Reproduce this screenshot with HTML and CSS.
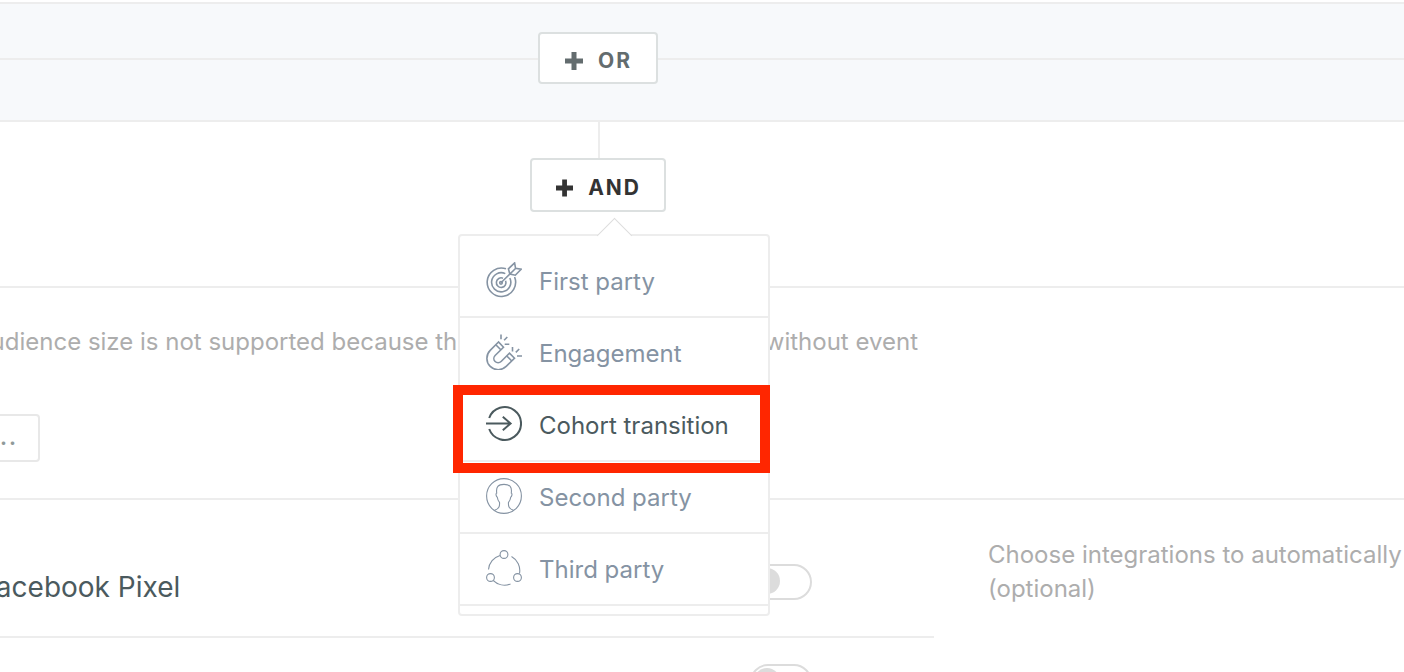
FILE: index.html
```html
<!DOCTYPE html>
<html lang="en">
<head>
<meta charset="utf-8">
<meta name="viewport" content="width=device-width,initial-scale=1">
<title>Audience builder</title>
<link rel="stylesheet" href="styles.css">
</head>
<body>

<!-- ---------- condition builder ---------- -->
<section class="or-band">
  <button type="button" class="btn btn-or">
    <svg class="plus" viewBox="0 0 18 18"><path d="M9 0v18M0 9h18"/></svg>OR
  </button>
</section>

<section class="and-area">
  <div class="and-wrap">
    <button type="button" class="btn btn-and" aria-haspopup="menu" aria-expanded="true">
      <svg class="plus" viewBox="0 0 18 18"><path d="M9 0v18M0 9h18"/></svg>AND
    </button>

    <ul class="menu">
      <li>
        <button type="button" class="menu-item">
          <svg class="icon" viewBox="0 0 36 36">
            <path d="M20 6.8A14.2 14.2 0 1 0 28.6 15"/>
            <path d="M19.3 11.6A9.6 9.6 0 1 0 23.8 16"/>
            <path d="M17 16.2A4.8 4.8 0 1 0 19.6 18.8"/>
            <circle cx="15" cy="20.8" r="1.3"/>
            <path d="M15 20.8 30 6M23.8 12l-1.4-5.2L28.6.9l1 5.4 5.5.9-5.8 6z"/>
          </svg>
          First party
        </button>
      </li>
      <li>
        <button type="button" class="menu-item">
          <svg class="icon" viewBox="0 0 36 36">
            <path d="M12.5 8 4.2 16.4a11.3 11.3 0 0 0 16 16l8.3-8.2-5-5-8.4 8.3a4.2 4.2 0 0 1-6-6l8.400-8.300z"/>
            <path d="M9.8 10.8l5 5M20.8 22l5 5"/>
            <path d="M15 .5v4.8M21.3 3l-3.2 3.3M18.7 10.2h4.6M26.5 13v4.4M33.2 15l-3.4 3.4M31 22h5"/>
          </svg>
          Engagement
        </button>
      </li>
      <li class="marked">
        <button type="button" class="menu-item active">
          <svg class="icon" viewBox="0 0 36 36">
            <path d="M3.2 12A16.4 16.4 0 1 1 3.2 23"/>
            <path d="M0 17.5h25M16.8 10.8l7.8 6.7-7.8 6.7"/>
          </svg>
          Cohort transition
        </button>
      </li>
      <li>
        <button type="button" class="menu-item">
          <svg class="icon thin" viewBox="0 0 36 36">
            <circle cx="18" cy="18" r="17.4"/>
            <path d="M8.3 32.5c4.8-2 5.6-4.2 5.2-8.2-1.4-1.6-2-3-2.2-5-1.2-.7-1.8-3.5-.6-4.2-.8-6.5 1.4-8.7 7.3-8.7s8.1 2.2 7.3 8.7c1.2.7.6 3.5-.6 4.2-.2 2-.8 3.4-2.2 5-.4 4 .4 6.2 5.2 8.2"/>
          </svg>
          Second party
        </button>
      </li>
      <li>
        <button type="button" class="menu-item">
          <svg class="icon thin" viewBox="0 0 36 36">
            <circle cx="18" cy="4.5" r="3.9"/>
            <circle cx="4.5" cy="27.5" r="3.9"/>
            <circle cx="31.5" cy="27.5" r="3.9"/>
            <path d="M14 5.5A16 16 0 0 0 2.5 19.5M25.5 6.5A16 16 0 0 1 33.5 23.5M7.3 30.5A16 16 0 0 0 24.5 34"/>
          </svg>
          Third party
        </button>
      </li>
    </ul>
  </div>
</section>

<!-- ---------- size estimate ---------- -->
<section class="estimate">
  <p class="note"><span>Audience size is not supported because th</span><span>without event</span></p>
  <button type="button" class="btn btn-more">...</button>
</section>

<!-- ---------- integrations ---------- -->
<section class="integrations">
  <div class="list">
    <div class="row">
      <label for="fb">Facebook Pixel</label>
      <input type="checkbox" class="toggle" id="fb">
    </div>
    <div class="row">
      <input type="checkbox" class="toggle" aria-label="Integration">
    </div>
  </div>
  <p class="hint">Choose integrations to automatically<br>(optional)</p>
</section>

</body>
</html>
```
FILE: styles.css
```css
:root{
  --line: #ededed;
  --btn-border: #dce0e0;
  --grey: #adadad;
  --slate: #8593a3;
  --dark: #4b5a5e;
  --red: #ff2600;
  --gutter: 208px;
}
*{box-sizing:border-box}
body{
  margin:0;padding-top:2px;height:100vh;overflow:hidden;
  font-family:Inter,"Liberation Sans",sans-serif;font-size:24px;line-height:34px;
  background:#fff;color:var(--dark);
}
p,ul{margin:0;padding:0}
ul{list-style:none}
button{font:inherit;color:inherit;cursor:pointer}

/* buttons */
.btn{
  display:flex;align-items:center;justify-content:center;gap:15px;
  padding:5px 23px 0 24px;background:#fff;border:2px solid var(--btn-border);border-radius:4px;
  font-size:21px;font-weight:700;letter-spacing:2px;
}
.plus{width:18px;height:18px;fill:none;stroke:currentColor;stroke-width:5}
.btn-or{width:120px;height:52px;color:#636c6e}
.btn-and{width:136px;height:54px;color:#333}

/* OR band, with the rule running behind the button */
.or-band{
  display:flex;justify-content:center;align-items:flex-start;
  height:120px;padding:28px var(--gutter) 0 0;
  border-top:2px solid var(--line);border-bottom:2px solid var(--line);
  background:linear-gradient(var(--line),var(--line)) 0 54px/100% 2px no-repeat #f7f9fb;
}

/* AND button + dropdown */
.and-area{
  display:flex;justify-content:center;height:166px;
  padding-right:var(--gutter);border-bottom:2px solid var(--line);
}
.and-wrap{position:relative;display:flex;flex-direction:column;align-items:center}
.and-wrap::before{content:"";height:36px;margin-left:2px;border-left:2px solid var(--line)}
.menu{
  position:absolute;z-index:2;top:112px;left:-72px;width:312px;
  padding:10px 0 8px;background:#fff;border:2px solid var(--line);border-radius:4px;
}
.menu::before{
  content:"";position:absolute;top:-13px;left:142px;width:24px;height:24px;
  background:#fff;border:solid #ddd;border-width:1px 0 0 1px;transform:rotate(45deg);
}
.menu li{position:relative;border-bottom:2px solid var(--line)}
.menu-item{
  display:flex;align-items:center;gap:17px;width:100%;height:70px;padding:2px 26px 0;
  background:none;border:0;color:var(--slate);text-align:left;white-space:nowrap;
}
.menu-item.active{color:var(--dark)}
.icon{flex:none;width:36px;height:36px;margin-bottom:4px;fill:none;stroke:currentColor;stroke-width:1.6}
.icon.thin{stroke-width:1.1}
.active .icon{stroke-width:2}
.marked::after{
  content:"";position:absolute;z-index:1;inset:-5px -2px -13px -7px;
  border:10px solid var(--red);pointer-events:none;
}

/* size estimate */
.estimate{height:212px;padding-top:37px;border-bottom:2px solid var(--line)}
.note{
  display:flex;justify-content:space-between;width:944px;margin-left:-26px;
  color:var(--grey);white-space:nowrap;
}
.btn-more{
  justify-content:flex-end;width:160px;height:48px;margin:55px 0 0 -120px;padding:0 20px;
  border-color:#e8e8e8;color:#8f9a9a;
}

/* integrations */
.integrations{
  display:grid;grid-template-columns:minmax(0,1fr) 416px;gap:54px;padding-top:38px;
}
.row{
  display:flex;align-items:flex-start;height:100px;padding:26px 122px 26px 0;
  border-bottom:2px solid var(--line);
}
.row label{margin-left:-20px;font-size:28px;line-height:46px}
.toggle{
  appearance:none;width:62px;height:36px;margin:0 0 0 auto;padding:2px;
  border:2px solid #dcdcdc;border-radius:18px;background:#fff;cursor:pointer;
}
.toggle::before{content:"";display:block;width:26px;height:26px;border-radius:50%;background:#dcdcdc}
.toggle:checked::before{margin-left:auto}
.hint{color:var(--grey);white-space:nowrap}
```
